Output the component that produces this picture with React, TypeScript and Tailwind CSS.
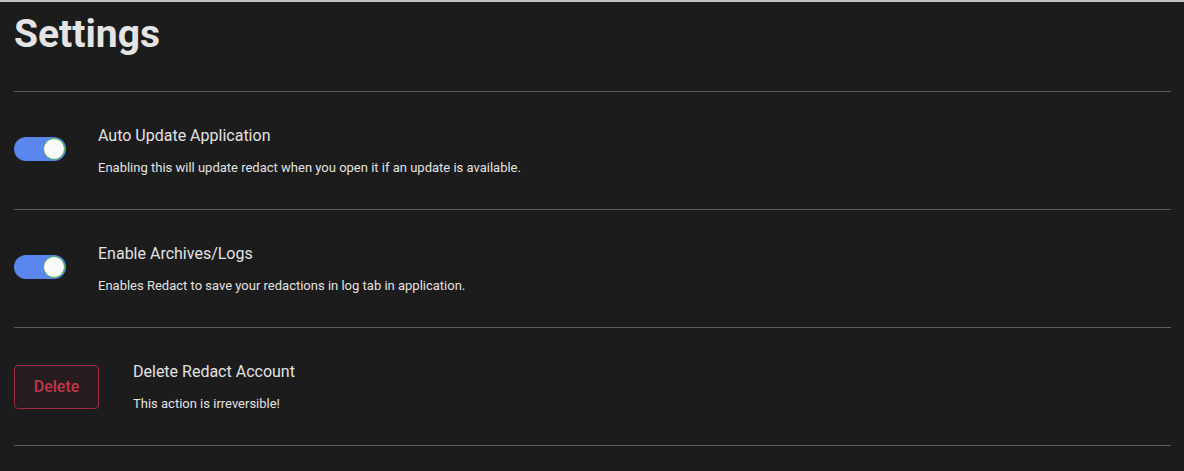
import { useState } from 'react';

function Toggle({ on, onChange }: { on: boolean; onChange: () => void }) {
  return (
    <button
      onClick={onChange}
      className={`relative mb-1 h-6 w-[52px] shrink-0 rounded-full ${on ? 'bg-[#5a86ee]' : 'bg-[#555]'}`}
    >
      <span
        className={`absolute top-[1px] h-[22px] w-[22px] rounded-full border border-[#4caf50] bg-[#fafafa] ${
          on ? 'left-[29px]' : 'left-[1px]'
        }`}
      />
    </button>
  );
}

export default function App() {
  const [autoUpdate, setAutoUpdate] = useState(true);
  const [logs, setLogs] = useState(true);

  return (
    <div
      className="min-h-[471px] border-t-2 border-[#c4c4c4] bg-[#1c1c1c] pl-[14px] pr-[13px] text-[#e2e2e2]"
      style={{ fontFamily: 'Roboto, "Liberation Sans", sans-serif' }}
    >
      <h1 className="h-[89px] pt-[8px] text-[39px] font-bold leading-[48px] text-[#e4e4e4]">Settings</h1>

      <div className="border-t border-[#5c5c5c]" />

      <div className="flex h-[117px] items-center gap-8">
        <Toggle on={autoUpdate} onChange={() => setAutoUpdate(!autoUpdate)} />
        <div>
          <p className="text-base leading-6">Auto Update Application</p>
          <p className="mt-[11px] text-[13px] leading-[18px]">
            Enabling this will update redact when you open it if an update is available.
          </p>
        </div>
      </div>

      <div className="border-t border-[#5c5c5c]" />

      <div className="flex h-[117px] items-center gap-8">
        <Toggle on={logs} onChange={() => setLogs(!logs)} />
        <div>
          <p className="text-base leading-6">Enable Archives/Logs</p>
          <p className="mt-[11px] text-[13px] leading-[18px]">
            Enables Redact to save your redactions in log tab in application.
          </p>
        </div>
      </div>

      <div className="border-t border-[#5c5c5c]" />

      <div className="flex h-[117px] items-center gap-[34px]">
        <button className="h-[44px] w-[85px] shrink-0 rounded-[4px] border border-[#9e2b3f] bg-[#261b1e] text-base font-medium text-[#c3364c]">
          Delete
        </button>
        <div>
          <p className="text-base leading-6">Delete Redact Account</p>
          <p className="mt-[11px] text-[13px] leading-[18px]">This action is irreversible!</p>
        </div>
      </div>

      <div className="border-t border-[#5c5c5c]" />
    </div>
  );
}
